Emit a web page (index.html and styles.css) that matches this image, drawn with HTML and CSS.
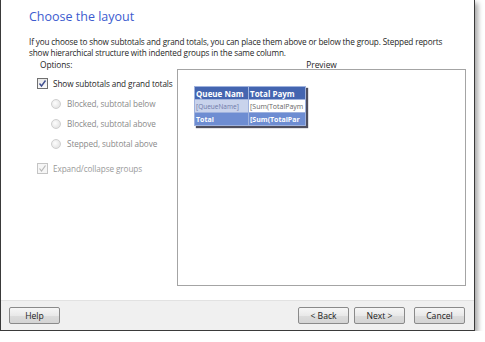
FILE: index.html
```html
<!DOCTYPE html>
<html lang="en">
<head>
  <meta charset="UTF-8">
  <link rel="stylesheet" href="styles.css">
</head>
<body>
<div class="dialog">
    <div class="content">
        <h1 class="title">Choose the layout</h1>
        <p class="intro">If you choose to show subtotals and grand totals, you can place them above or below the group. Stepped reports show hierarchical structure with indented groups in the same column.</p>
        <div class="columns">
            <div class="options">
                <p class="label">Options:</p>
                <div class="check-row">
                    <span class="check checked">
                        <svg width="9" height="9" viewBox="0 0 9 9"><path d="M1.5 4.5 L3.5 7 L7.5 1.5" fill="none" stroke="#3f4f8f" stroke-width="1.4"/></svg>
                    </span>
                    <span>Show subtotals and grand totals</span>
                </div>
                <div class="radio-row"><span class="radio"></span><span>Blocked, subtotal below</span></div>
                <div class="radio-row"><span class="radio"></span><span>Blocked, subtotal above</span></div>
                <div class="radio-row"><span class="radio"></span><span>Stepped, subtotal above</span></div>
                <div class="check-row disabled">
                    <span class="check">
                        <svg width="9" height="9" viewBox="0 0 9 9"><path d="M1.5 4.5 L3.5 7 L7.5 1.5" fill="none" stroke="#b8b8b8" stroke-width="1.2"/></svg>
                    </span>
                    <span>Expand/collapse groups</span>
                </div>
            </div>
            <div class="preview">
                <p class="label center">Preview</p>
                <div class="preview-box">
                    <table class="report">
                        <tr class="head"><td class="c1">Queue Nam</td><td class="c2">Total Paym</td></tr>
                        <tr class="detail"><td class="c1">[QueueName]</td><td class="c2">[Sum(TotalPaym</td></tr>
                        <tr class="total"><td class="c1">Total</td><td class="c2">[Sum(TotalPar</td></tr>
                    </table>
                </div>
            </div>
        </div>
    </div>
    <div class="footer">
        <button>Help</button>
        <div class="spacer"></div>
        <button>&lt; Back</button>
        <button>Next &gt;</button>
        <button class="cancel">Cancel</button>
    </div>
</div>
</body>
</html>
```
FILE: styles.css
```css
body {
    margin: 0;
    padding: 0;
    background: #fff;
    font-family: 'Open Sans', sans-serif;
    color: #1e1e1e;
}
p {
    margin: 0;
}
.dialog {
    width: 473px;
    height: 330px;
    display: flex;
    flex-direction: column;
    border-left: 1px solid #3a3a3a;
    border-right: 1px solid #3a3a3a;
    border-bottom: 1px solid #3a3a3a;
    box-shadow: 3px 3px 5px rgba(0, 0, 0, 0.35);
    background: #fff;
}
.content {
    flex: 1;
    padding: 0 0 0 28px;
}
.title {
    margin: 8px 0 0 0;
    font-size: 12.5px;
    font-weight: 400;
    color: #3c5bcf;
}
.intro {
    margin-top: 11px;
    font-size: 8.2px;
    letter-spacing: -0.15px;
    line-height: 11px;
    width: 421px;
}
.columns {
    display: flex;
    margin-top: 2px;
}
.options {
    width: 140px;
    padding-left: 8px;
    font-size: 8.2px;
    letter-spacing: -0.1px;
}
.label {
    font-size: 8.4px;
    line-height: 10px;
    margin-left: 3px;
}
.center {
    text-align: center;
    margin-left: 0;
}
.check-row {
    display: flex;
    align-items: center;
    margin-top: 8px;
    height: 11px;
    white-space: nowrap;
}
.check {
    width: 9px;
    height: 9px;
    border: 1px solid #8e8f8f;
    background: linear-gradient(#e8e8e8, #fafafa);
    margin-right: 5px;
    display: flex;
    align-items: center;
    justify-content: center;
    flex: none;
}
.checked {
    border-color: #707070;
}
.disabled {
    color: #9a9a9a;
    margin-top: 14px;
}
.disabled .check {
    border-color: #c4c4c4;
    background: #f6f6f6;
}
.radio-row {
    display: flex;
    align-items: center;
    margin-top: 9px;
    margin-left: 14px;
    height: 11px;
    color: #8a8a8a;
}
.radio {
    width: 8px;
    height: 8px;
    border-radius: 50%;
    border: 1px solid #cfcfcf;
    background: radial-gradient(circle at 40% 40%, #fdfdfd, #dcdcdc);
    margin-right: 6px;
}
.preview {
    width: 289px;
}
.preview-box {
    margin-top: -1px;
    border: 1px solid #a4a4a4;
    padding: 16px 0 0 16px;
    box-sizing: border-box;
    height: 217px;
}
.report {
    border-collapse: collapse;
    font-size: 7px;
    table-layout: fixed;
    width: 112px;
    box-shadow: 2px 2px 1px rgba(20, 20, 40, 0.75);
    border: 1px solid #2d3f7a;
}
.report td {
    height: 12px;
    padding: 0 1px;
    white-space: nowrap;
    overflow: hidden;
    border: 1px solid #9fb2de;
}
.report .c1 {
    width: 51px;
}
.head td {
    background: #4465b0;
    color: #fff;
    font-weight: 700;
    font-size: 8px;
}
.detail .c1 {
    background: #c9d3ec;
    color: #6f7aa8;
    font-size: 6.5px;
}
.detail .c2 {
    background: #fff;
    color: #666;
}
.total td {
    background: #6e8dd2;
    color: #fff;
    font-weight: 700;
}
.footer {
    height: 29px;
    background: #f0f0f0;
    border-top: 1px solid #e2e2e2;
    display: flex;
    align-items: center;
    padding: 0 9px 0 8px;
    gap: 5px;
}
.spacer {
    flex: 1;
}
button {
    font-family: 'Open Sans', sans-serif;
    font-size: 8.6px;
    color: #222;
    width: 51px;
    height: 17px;
    padding: 0;
    border: 1px solid #8a8a8a;
    border-radius: 2px;
    background: linear-gradient(#f6f6f6 0%, #e9e9e9 50%, #dcdcdc 51%, #d4d4d4 100%);
}
.cancel {
    margin-left: 4px;
}
```
